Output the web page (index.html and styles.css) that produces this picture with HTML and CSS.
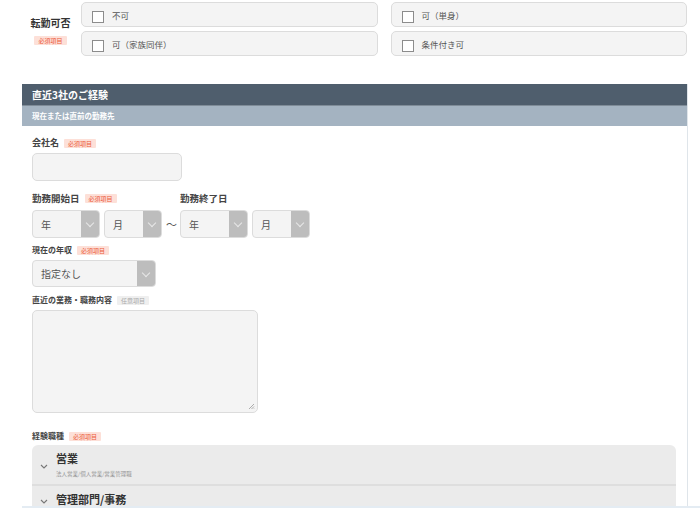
FILE: index.html
```html
<!DOCTYPE html>
<html lang="ja">
<head>
<meta charset="utf-8" />
<meta name="viewport" content="width=device-width, initial-scale=1" />
<title>職務経歴入力</title>
<link rel="stylesheet" href="styles.css">
</head>
<body>

<div class="transfer">
  <div class="transfer-label">
    <span class="transfer-title">転勤可否</span>
    <span class="badge">必須項目</span>
  </div>
  <div class="choice-grid">
    <label class="choice"><span class="check"></span>不可</label>
    <label class="choice"><span class="check"></span>可（単身）</label>
    <label class="choice"><span class="check"></span>可（家族同伴）</label>
    <label class="choice"><span class="check"></span>条件付き可</label>
  </div>
</div>

<section class="career">
  <h2 class="career-head">直近3社のご経験</h2>
  <h3 class="career-sub">現在または直前の勤務先</h3>

  <div class="career-body">
    <div class="field-label lbl-company">会社名<span class="badge">必須項目</span></div>
    <div class="text-input"></div>

    <div class="date-labels">
      <div class="field-label lbl-date lbl-start">勤務開始日<span class="badge">必須項目</span></div>
      <div class="field-label lbl-date">勤務終了日</div>
    </div>
    <div class="date-row">
      <div class="select sel-year"><span>年</span><i class="arrow"></i></div>
      <div class="select sel-month"><span>月</span><i class="arrow"></i></div>
      <span class="tilde">～</span>
      <div class="select sel-year"><span>年</span><i class="arrow"></i></div>
      <div class="select sel-month"><span>月</span><i class="arrow"></i></div>
    </div>

    <div class="field-label lbl-small">現在の年収<span class="badge">必須項目</span></div>
    <div class="select sel-income"><span>指定なし</span><i class="arrow"></i></div>

    <div class="field-label lbl-small lbl-duties">直近の業務・職務内容<span class="badge badge-opt">任意項目</span></div>
    <div class="textarea"><svg class="grip" width="7" height="7" viewBox="0 0 7 7"><path d="M6 1L1 6M6 3.5L3.5 6M6 5.5L5.5 6" stroke="#999" stroke-width="0.8"/></svg></div>

    <div class="field-label lbl-small lbl-jobs">経験職種<span class="badge">必須項目</span></div>
    <div class="accordion">
      <div class="acc-item">
        <svg class="acc-icon" width="8" height="5" viewBox="0 0 8 5"><path d="M1 1l3 3 3-3" fill="none" stroke="#777" stroke-width="1.1"/></svg>
        <div>
          <div class="acc-title">営業</div>
          <div class="acc-note">法人営業/個人営業/営業管理職</div>
        </div>
      </div>
      <div class="acc-item">
        <svg class="acc-icon" width="8" height="5" viewBox="0 0 8 5"><path d="M1 1l3 3 3-3" fill="none" stroke="#777" stroke-width="1.1"/></svg>
        <div>
          <div class="acc-title">管理部門/事務</div>
        </div>
      </div>
    </div>
  </div>
</section>

<div class="footer-edge"></div>

</body>
</html>
```

FILE: styles.css
```css
:root {
  --field-bg: #f4f4f4;
  --field-border: #dcdcdc;
  --text: #333;
  --muted: #555;
  --req-bg: #fde0d8;
  --req-text: #ec5a38;
  --head: #4f5e6d;
  --sub: #a4b3c1;
}
*{box-sizing:border-box;margin:0;padding:0;}
body{
  background:#fff;
  color:var(--text);
  font-family:"Noto Sans CJK JP","Noto Sans",sans-serif;
  width:700px;
  height:508px;
  overflow:hidden;
}

/* transfer choice block */
.transfer{
  display:flex;
  align-items:center;
  padding:2px 13px 0 20px;
}
.transfer-label{
  width:61px;
  display:flex;
  flex-direction:column;
  align-items:center;
  gap:7px;
  padding-top:4px;
}
.transfer-title{font-size:10px;font-weight:700;line-height:12px;color:#333;}
.choice-grid{
  flex:1;
  display:grid;
  grid-template-columns:1fr 1fr;
  column-gap:13px;
  row-gap:4px;
}
.choice{
  height:25px;
  background:var(--field-bg);
  border:1px solid var(--field-border);
  border-radius:5px;
  display:flex;
  align-items:flex-start;
  padding:7px 0 0 10px;
  font-size:8.5px;
  line-height:10px;
  color:var(--muted);
}
.check{
  width:12px;
  height:12px;
  border:1.5px solid #8c8c8c;
  background:#fff;
  margin:1px 8px 0 0;
}

.badge{
  display:inline-block;
  background:var(--req-bg);
  color:var(--req-text);
  font-size:6px;
  font-weight:400;
  line-height:9px;
  padding:0 4px;
  border-radius:1px;
  vertical-align:middle;
}
.badge-opt{background:#efefef;color:#aaa;}

/* career section */
.career{
  margin:28px 12px 0 22px;
  border-right:1px solid #dfe5ea;
}
.career-head{
  background:var(--head);
  color:#fff;
  font-size:10px;
  font-weight:700;
  line-height:21px;
  padding-left:10px;
  border-bottom:1px solid #7f8c98;
}
.career-sub{
  background:var(--sub);
  color:#fff;
  font-size:7.5px;
  font-weight:700;
  line-height:20px;
  padding-left:10px;
}
.career-body{padding:11px 0 0 10px;}

.field-label{
  font-size:9px;
  font-weight:700;
  line-height:12px;
  color:#444;
  display:flex;
  align-items:center;
  gap:5px;
}
.lbl-small{font-size:8px;margin-top:6px;}
.lbl-duties{margin-top:7px;}
.lbl-jobs{margin-top:17px;}

.text-input{
  width:150px;
  height:28px;
  margin-top:4px;
  background:var(--field-bg);
  border:1.5px solid var(--field-border);
  border-radius:5px;
}

.date-labels{display:flex;margin-top:11px;}
.lbl-date{font-size:9.5px;}
.lbl-start{width:148px;}

.date-row{
  display:flex;
  align-items:center;
  gap:4px;
  margin-top:6px;
}
.select{
  height:28px;
  display:flex;
  align-items:center;
  background:var(--field-bg);
  border:1.5px solid var(--field-border);
  border-radius:4px;
  overflow:hidden;
  font-size:10px;
  color:var(--muted);
}
.select span{flex:1;padding-left:8px;}
.arrow{
  width:18px;
  height:100%;
  background:#bdbdbd;
  position:relative;
}
.arrow::after{
  content:"";
  position:absolute;
  left:6px;
  top:9px;
  width:5px;
  height:5px;
  border-right:1.2px solid #e8e8e8;
  border-bottom:1.2px solid #e8e8e8;
  transform:rotate(45deg);
}
.sel-year{width:68px;}
.sel-month{width:58px;}
.tilde{width:10px;font-size:11px;color:#555;text-align:center;}
.sel-income{width:124px;height:27px;margin-top:4px;}

.textarea{
  width:226px;
  height:103px;
  margin-top:4px;
  background:var(--field-bg);
  border:1.5px solid var(--field-border);
  border-radius:5px;
  display:flex;
  align-items:flex-end;
  justify-content:flex-end;
  padding:2px;
}

.accordion{
  width:644px;
  margin-top:3px;
  background:#ebebeb;
  border-radius:6px 6px 0 0;
}
.acc-item{
  display:flex;
  align-items:center;
  gap:8px;
  padding:6px 0 6px 8px;
  border-bottom:2px solid #dedede;
}
.acc-icon{flex:none;margin-top:4px;}
.acc-title{font-size:11px;font-weight:700;line-height:14px;color:#333;}
.acc-note{font-size:5.5px;line-height:8px;color:#999;margin-top:5px;}

/* thin bar pinned at the viewport bottom */
.footer-edge{
  position:fixed;
  left:22px;
  right:0;
  bottom:0;
  height:2px;
  background:#e4ecf3;
}
```
